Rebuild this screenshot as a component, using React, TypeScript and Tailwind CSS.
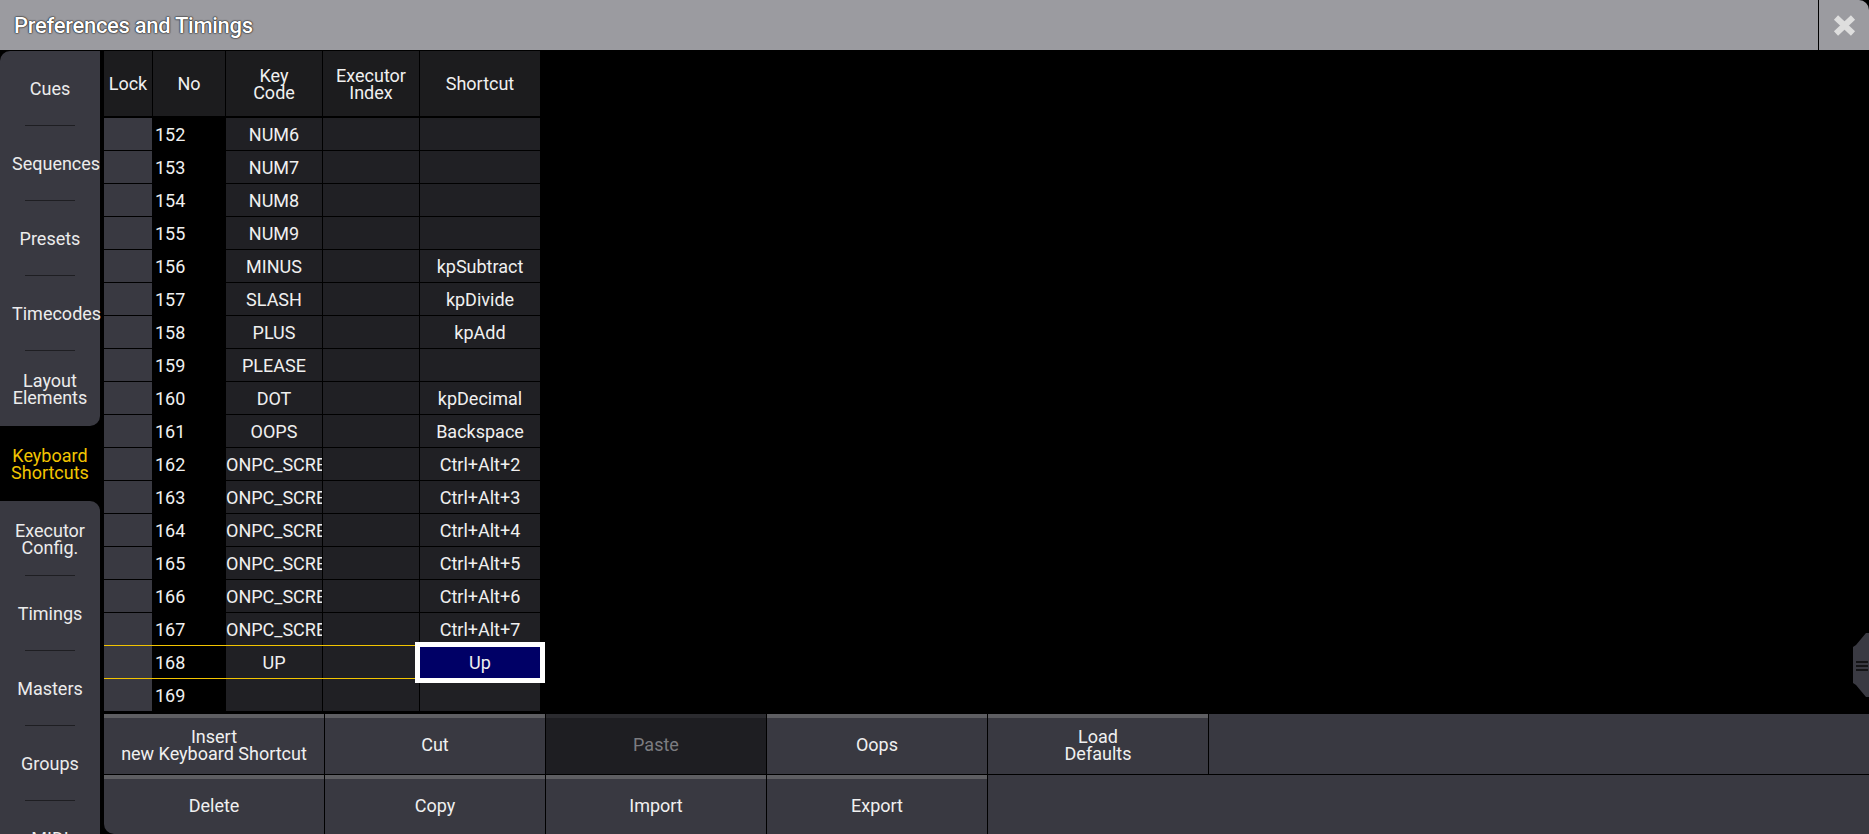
import React from "react";

interface ShortcutRow {
  no: number;
  keyCode: string;
  executor: string;
  shortcut: string;
}

const rows: ShortcutRow[] = [
  { no: 152, keyCode: "NUM6", executor: "", shortcut: "" },
  { no: 153, keyCode: "NUM7", executor: "", shortcut: "" },
  { no: 154, keyCode: "NUM8", executor: "", shortcut: "" },
  { no: 155, keyCode: "NUM9", executor: "", shortcut: "" },
  { no: 156, keyCode: "MINUS", executor: "", shortcut: "kpSubtract" },
  { no: 157, keyCode: "SLASH", executor: "", shortcut: "kpDivide" },
  { no: 158, keyCode: "PLUS", executor: "", shortcut: "kpAdd" },
  { no: 159, keyCode: "PLEASE", executor: "", shortcut: "" },
  { no: 160, keyCode: "DOT", executor: "", shortcut: "kpDecimal" },
  { no: 161, keyCode: "OOPS", executor: "", shortcut: "Backspace" },
  { no: 162, keyCode: "ONPC_SCREEN2", executor: "", shortcut: "Ctrl+Alt+2" },
  { no: 163, keyCode: "ONPC_SCREEN3", executor: "", shortcut: "Ctrl+Alt+3" },
  { no: 164, keyCode: "ONPC_SCREEN4", executor: "", shortcut: "Ctrl+Alt+4" },
  { no: 165, keyCode: "ONPC_SCREEN5", executor: "", shortcut: "Ctrl+Alt+5" },
  { no: 166, keyCode: "ONPC_SCREEN6", executor: "", shortcut: "Ctrl+Alt+6" },
  { no: 167, keyCode: "ONPC_SCREEN7", executor: "", shortcut: "Ctrl+Alt+7" },
  { no: 168, keyCode: "UP", executor: "", shortcut: "Up" },
  { no: 169, keyCode: "", executor: "", shortcut: "" },
];

const SELECTED = 168;

const topTabs = [["Cues"], ["Sequences"], ["Presets"], ["Timecodes"], ["Layout", "Elements"]];
const bottomTabs = [["Executor", "Config."], ["Timings"], ["Masters"], ["Groups"], ["MIDI"]];

const Lines: React.FC<{ lines: string[] }> = ({ lines }) => (
  <div className="flex flex-col items-center leading-[17px]">
    {lines.map((l) => (
      <span key={l} className="whitespace-nowrap">{l}</span>
    ))}
  </div>
);

// labels too wide for the tab start at the left padding and run past the right edge
const Tab: React.FC<{ lines: string[]; divider: boolean }> = ({ lines, divider }) => {
  const wide = lines.some((l) => l.length > 8);
  return (
    <div
      className={`relative h-[75px] shrink-0 flex items-center px-[12px] text-[#ececec] ${wide ? "justify-start" : "justify-center"}`}
    >
      <Lines lines={lines} />
      {divider && <div className="absolute bottom-0 left-[25px] w-[50px] h-px bg-[#1e1e22]" />}
    </div>
  );
};

const Button: React.FC<{ lines: string[]; disabled?: boolean }> = ({ lines, disabled }) => (
  <div
    className={`w-[220px] shrink-0 flex flex-col ${disabled ? "bg-[#1e1e22] text-[#7c7c80]" : "bg-[#393941] text-[#f0f0f0]"}`}
  >
    <div className={`h-[4px] ${disabled ? "bg-[#2b2b2f]" : "bg-[#5e5e62]"}`} />
    <div className="flex-1 flex items-center justify-center pb-[3px]">
      <Lines lines={lines} />
    </div>
  </div>
);

export default function App() {
  return (
    <div
      className="w-[1869px] h-[834px] bg-black flex flex-col overflow-hidden text-[18px]"
      style={{ fontFamily: "Roboto, 'Noto Sans', sans-serif" }}
    >
      {/* title bar */}
      <div className="h-[50px] shrink-0 flex bg-[#9b9ba0] rounded-tr-[10px]">
        <div className="flex-1 flex items-center pl-[14px] text-[22px] font-medium tracking-[-0.3px] text-white [text-shadow:0_0_2px_#1a1a1a,0_0_1px_#1a1a1a,0_0_1px_#1a1a1a]">
          Preferences and Timings
        </div>
        <div className="w-[51px] border-l border-black flex items-center justify-center">
          <svg width="25" height="23" viewBox="0 0 25 23">
            <path d="M4 3.5 L21 19.5 M21 3.5 L4 19.5" stroke="#dedede" strokeWidth="6" strokeLinecap="butt" />
          </svg>
        </div>
      </div>

      <div className="flex-1 flex pt-[1px] min-h-0">
        {/* side tabs */}
        <div className="w-[100px] shrink-0 flex flex-col">
          <div className="bg-[#393941] rounded-tl-[10px] rounded-br-[10px] flex flex-col">
            {topTabs.map((t, i) => (
              <Tab key={t[0]} lines={t} divider={i < topTabs.length - 1} />
            ))}
          </div>
          <div className="h-[75px] shrink-0 flex items-center justify-center text-[#f2c400]">
            <Lines lines={["Keyboard", "Shortcuts"]} />
          </div>
          <div className="flex-1 bg-[#393941] rounded-tr-[10px] flex flex-col overflow-hidden">
            {bottomTabs.map((t, i) => (
              <Tab key={t[0]} lines={t} divider={i < bottomTabs.length - 1} />
            ))}
          </div>
        </div>

        <div className="flex-1 flex flex-col ml-[4px] min-w-0">
          {/* table */}
          <div className="relative h-[662px] shrink-0">
            <div className="flex h-[65px] gap-px text-[#f0f0f0]">
              <div className="w-[48px] bg-[#1c1c1e] flex items-center justify-center">Lock</div>
              <div className="w-[72px] bg-[#1c1c1e] flex items-center justify-center">No</div>
              <div className="w-[96px] bg-[#1c1c1e] flex items-center justify-center"><Lines lines={["Key", "Code"]} /></div>
              <div className="w-[96px] bg-[#1c1c1e] flex items-center justify-center"><Lines lines={["Executor", "Index"]} /></div>
              <div className="w-[120px] bg-[#1c1c1e] flex items-center justify-center">Shortcut</div>
            </div>
            <div className="flex flex-col gap-px mt-[2px]">
              {rows.map((r) => {
                const long = r.keyCode.length > 9;
                const sel = r.no === SELECTED;
                return (
                  <div key={r.no} className="relative flex h-[32px] gap-px text-[#f0f0f0]">
                    <div className="w-[48px] bg-[#393941]" />
                    <div className="w-[72px] bg-black flex items-center pl-[2px]">{r.no}</div>
                    <div className={`w-[96px] bg-[#202024] flex items-center overflow-hidden whitespace-nowrap ${long ? "justify-start" : "justify-center"}`}>
                      {r.keyCode}
                    </div>
                    <div className="w-[96px] bg-[#202024] flex items-center justify-center">{r.executor}</div>
                    <div className="relative w-[120px] bg-[#202024] flex items-center justify-center">
                      {sel ? (
                        <div className="absolute -left-[5px] -right-[5px] -top-[4px] -bottom-[5px] border-[5px] border-white bg-[#000066] flex items-center justify-center text-[#f0f0f0] z-10">
                          {r.shortcut}
                        </div>
                      ) : (
                        r.shortcut
                      )}
                    </div>
                    {sel && (
                      <>
                        <div className="absolute left-0 w-[311px] -top-px h-px bg-[#f2c400]" />
                        <div className="absolute left-0 w-[311px] -bottom-px h-px bg-[#f2c400]" />
                      </>
                    )}
                  </div>
                );
              })}
            </div>

            {/* resize handle on the right edge */}
            <div className="absolute right-0 top-[582px] w-[16px] h-[64px]">
              <svg width="16" height="64" viewBox="0 0 16 64">
                <path d="M16 0 L16 64 L13 64 L3 52 L0 50 L0 14 L3 12 L13 0 Z" fill="#3a3a42" />
                <rect x="3" y="28" width="12" height="2" fill="#141416" />
                <rect x="3" y="32" width="12" height="2" fill="#141416" />
                <rect x="3" y="36" width="12" height="2" fill="#141416" />
              </svg>
            </div>
          </div>

          {/* command buttons */}
          <div className="flex-1 flex flex-col gap-px mt-px bg-black rounded-bl-[10px] overflow-hidden">
            <div className="h-[60px] flex gap-px">
              <Button lines={["Insert", "new Keyboard Shortcut"]} />
              <Button lines={["Cut"]} />
              <Button lines={["Paste"]} disabled />
              <Button lines={["Oops"]} />
              <Button lines={["Load", "Defaults"]} />
              <div className="flex-1 bg-[#393941]" />
            </div>
            <div className="flex-1 flex gap-px">
              <Button lines={["Delete"]} />
              <Button lines={["Copy"]} />
              <Button lines={["Import"]} />
              <Button lines={["Export"]} />
              <div className="flex-1 bg-[#393941]" />
            </div>
          </div>
        </div>
      </div>
    </div>
  );
}
